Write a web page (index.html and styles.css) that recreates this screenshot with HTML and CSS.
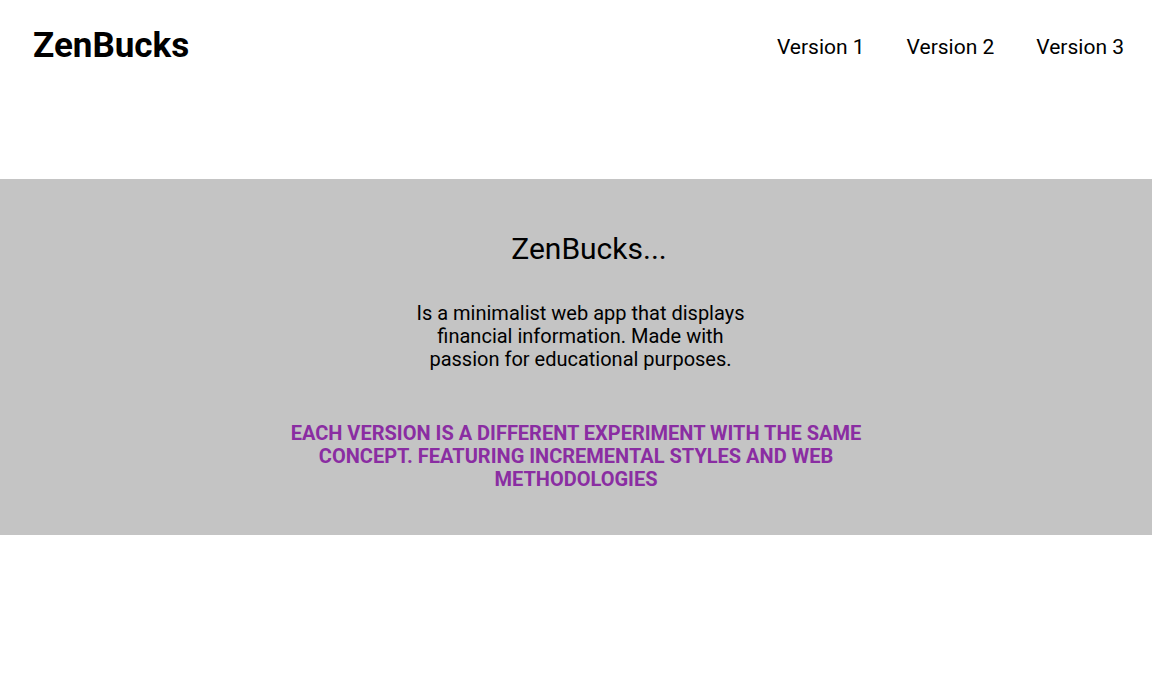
FILE: index.html
```html
<!DOCTYPE html>
<html>
<head>
<meta charset="utf-8">
<link rel="stylesheet" href="styles.css">
</head>
<body>
<header class="header">
  <div class="logo">ZenBucks</div>
  <nav class="nav">
    <a class="nav-link" href="#">Version 1</a>
    <a class="nav-link" href="#">Version 2</a>
    <a class="nav-link" href="#">Version 3</a>
  </nav>
</header>
<section class="band">
  <h2 class="band-title">ZenBucks...</h2>
  <p class="band-text">Is a minimalist web app that displays financial information. Made with passion for educational purposes.</p>
  <p class="band-note">EACH VERSION IS A DIFFERENT EXPERIMENT WITH THE SAME CONCEPT. FEATURING INCREMENTAL STYLES AND WEB METHODOLOGIES</p>
</section>
</body>
</html>
```
FILE: styles.css
```css
* { box-sizing: border-box; }
body {
  margin: 0;
  font-family: Roboto, "Liberation Sans", sans-serif;
  color: #000;
  background: #fff;
}
.header {
  display: flex;
  justify-content: space-between;
  align-items: flex-start;
  padding: 22px 28px 0 33px;
  height: 179px;
}
.logo {
  font-size: 35px;
  font-weight: 700;
  line-height: 48px;
}
.nav {
  display: flex;
  gap: 42px;
  padding-top: 11px;
}
.nav-link {
  color: #000;
  text-decoration: none;
  font-size: 21px;
  line-height: 28px;
}
.band {
  background: #c4c4c4;
  height: 356px;
  display: flex;
  flex-direction: column;
  align-items: center;
  padding-top: 50px;
}
.band-title {
  margin: 0;
  font-size: 30px;
  font-weight: 400;
  line-height: 40px;
  padding-left: 26px;
}
.band-text {
  margin: 33px 0 0 9px;
  width: 340px;
  text-align: center;
  font-size: 20px;
  line-height: 23px;
}
.band-note {
  margin: 51px 0 0;
  width: 600px;
  text-align: center;
  font-size: 20px;
  font-weight: 700;
  line-height: 23px;
  color: #8a2da2;
}
```
